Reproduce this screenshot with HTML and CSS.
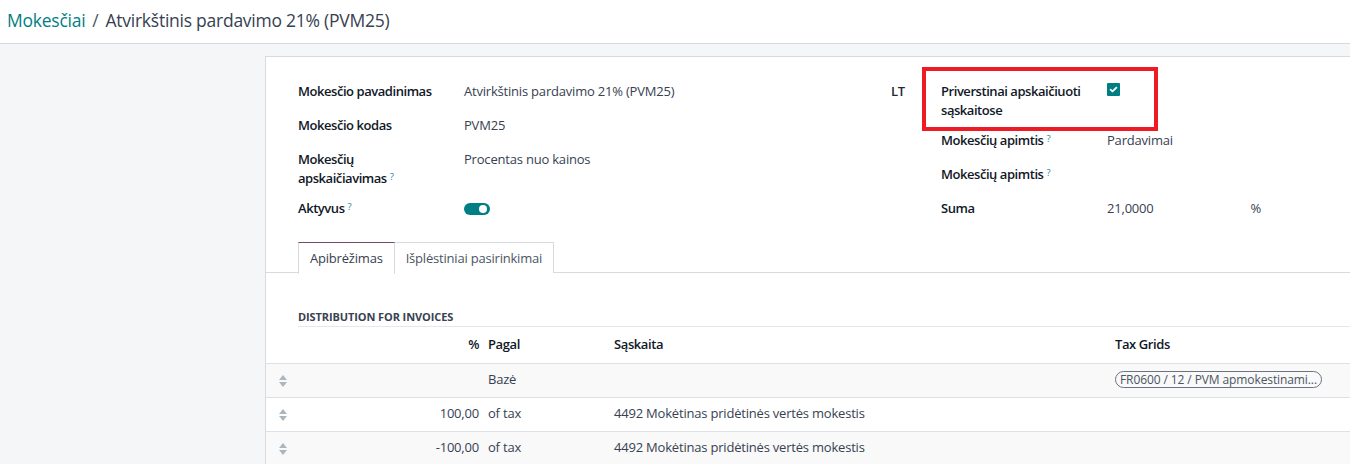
FILE: index.html
```html
<!DOCTYPE html>
<html lang="lt">
<head>
<meta charset="utf-8">
<title>Mokesčiai</title>
<link rel="stylesheet" href="styles.css">
</head>
<body>
<header class="topbar">
  <nav class="breadcrumb"><a class="crumb-link">Mokesčiai</a><span class="crumb-sep">/</span><span class="crumb-current">Atvirkštinis pardavimo 21% (PVM25)</span></nav>
</header>
<main class="content">
  <section class="sheet">
    <div class="groups">
      <div class="group group-left">
        <div class="frow"><div class="flabel">Mokesčio pavadinimas</div><div class="fvalue">Atvirkštinis pardavimo 21% (PVM25)</div></div>
        <div class="frow"><div class="flabel">Mokesčio kodas</div><div class="fvalue">PVM25</div></div>
        <div class="frow"><div class="flabel">Mokesčių apskaičiavimas<sup class="help">?</sup></div><div class="fvalue">Procentas nuo kainos</div></div>
        <div class="frow"><div class="flabel">Aktyvus<sup class="help">?</sup></div><div class="fvalue"><span class="toggle"><span class="knob"></span></span></div></div>
      </div>
      <div class="country">LT</div>
      <div class="group group-right">
        <div class="highlight"></div>
        <div class="frow"><div class="flabel">Priverstinai apskaičiuoti sąskaitose</div><div class="fvalue"><span class="checkbox"><svg viewBox="0 0 13 13" width="13" height="13"><path d="M3.6 6.7 L5.5 8.4 L9.4 4.6" fill="none" stroke="#fff" stroke-width="1.8" stroke-linecap="round" stroke-linejoin="round"/></svg></span></div></div>
        <div class="frow"><div class="flabel">Mokesčių apimtis<sup class="help">?</sup></div><div class="fvalue">Pardavimai</div></div>
        <div class="frow"><div class="flabel">Mokesčių apimtis<sup class="help">?</sup></div><div class="fvalue"></div></div>
        <div class="frow"><div class="flabel">Suma</div><div class="fvalue amount"><span>21,0000</span><span class="unit">%</span></div></div>
      </div>
    </div>

    <div class="notebook">
      <ul class="tabs">
        <li class="tab active">Apibrėžimas</li>
        <li class="tab">Išplėstiniai pasirinkimai</li>
      </ul>
      <div class="tab-pane">
        <div class="separator">DISTRIBUTION FOR INVOICES</div>
        <table class="lines">
          <colgroup>
            <col class="c-handle"><col class="c-pct"><col class="c-base"><col class="c-acc"><col class="c-grid">
          </colgroup>
          <thead>
            <tr><th></th><th class="num">%</th><th>Pagal</th><th>Sąskaita</th><th>Tax Grids</th></tr>
          </thead>
          <tbody>
            <tr class="odd"><td class="handle"><span class="arrows"></span></td><td class="num"></td><td>Bazė</td><td></td><td><span class="tag">FR0600 / 12 / PVM apmokestinami...</span></td></tr>
            <tr><td class="handle"><span class="arrows"></span></td><td class="num">100,00</td><td>of tax</td><td>4492 Mokėtinas pridėtinės vertės mokestis</td><td></td></tr>
            <tr class="odd"><td class="handle"><span class="arrows"></span></td><td class="num">-100,00</td><td>of tax</td><td>4492 Mokėtinas pridėtinės vertės mokestis</td><td></td></tr>
          </tbody>
        </table>
      </div>
    </div>
  </section>
</main>
</body>
</html>
```
FILE: styles.css
```css
* { box-sizing: border-box; }
html, body { margin: 0; padding: 0; }
body {
  font-family: "Open Sans", "Noto Sans", "Liberation Sans", sans-serif;
  font-size: 13px;
  line-height: 1.5;
  letter-spacing: -0.2px;
  color: #374151;
  background: #f5f6f8;
  height: 464px;
  overflow: hidden;
}
.topbar {
  height: 44px;
  background: #fff;
  border-bottom: 1px solid #d8dadd;
  display: flex;
  align-items: center;
  padding: 0 7px 2px;
}
.breadcrumb { font-size: 17.5px; letter-spacing: -0.25px; color: #374151; white-space: nowrap; }
.crumb-link { color: #017e84; }
.crumb-sep { margin: 0 7px; color: #4b5563; }
.content { padding: 12px 0 0 265px; }
.sheet {
  background: #fff;
  border-top: 1px solid #d8dadd;
  border-left: 1px solid #d8dadd;
  min-height: 420px;
  padding-top: 17px;
}
.groups { display: flex; padding-left: 32px; }
.group { display: flex; flex-direction: column; }
.group-left { width: 593px; }
.country { width: 25px; padding-top: 8px; font-weight: 600; color: #1f2937; line-height: 19px; letter-spacing: -0.4px; }
.group-right { position: relative; width: 380px; padding-left: 25px; }
.frow { display: grid; grid-template-columns: 166px 1fr; min-height: 34px; }
.flabel {
  padding: 8px 20px 3px 0;
  font-weight: 600;
  color: #111827;
  line-height: 19px;
  letter-spacing: -0.45px;
}
.fvalue { padding: 7px 0 4px; line-height: 20px; color: #374151; }
.help { color: #1d7fa0; font-size: 9.5px; font-weight: 500; margin-left: 3px; vertical-align: top; position: relative; top: -2px; }
.toggle {
  display: inline-block; width: 26px; height: 12px; border-radius: 6px;
  background: #017e84; position: relative; margin-top: 5px;
}
.knob { position: absolute; right: 3px; top: 2px; width: 8px; height: 8px; border-radius: 50%; background: #fff; }
.checkbox {
  display: inline-block; width: 13px; height: 13px; background: #017e84;
  border-radius: 1px; margin-top: 2px; vertical-align: top;
}
.checkbox svg { display: block; }
.amount { display: flex; }
.amount .unit { margin-left: 97px; }
.highlight {
  position: absolute; left: 6px; top: -7px; width: 236px; height: 64px;
  border: 4px solid #ed1c24; pointer-events: none;
}
.notebook { margin-top: 17px; }
.tabs {
  list-style: none; margin: 0; padding: 0 0 0 32px;
  display: flex; border-bottom: 1px solid #d8dadd; height: 31px;
}
.tab {
  padding: 0 11px; height: 31px; line-height: 30px;
  border: 1px solid #d8dadd; border-bottom: none; margin-left: -1px;
  color: #4b5563; background: #fff;
}
.tab:first-child { margin-left: 0; }
.tab.active { border-top-color: #714b67; color: #374151; height: 32px; position: relative; }
.tab-pane { padding-top: 36px; }
.separator {
  margin-left: 32px; font-size: 11px; font-weight: 700; color: #374151;
  line-height: 16px; padding-bottom: 1px; border-bottom: 1px solid #e5e7eb;
  letter-spacing: -0.1px;
}
.lines { width: 1084px; border-collapse: collapse; table-layout: fixed; }
.c-handle { width: 32px; }
.c-pct { width: 186px; }
.c-base { width: 126px; }
.c-acc { width: 501px; }
.lines th, .lines td { height: 34px; padding: 0 4px; text-align: left; vertical-align: middle; white-space: nowrap; overflow: hidden; }
.lines th { font-weight: 600; color: #111827; height: 36px; letter-spacing: -0.4px; }
.lines thead tr { border-bottom: 1px solid #dee2e6; }
.lines tbody tr { border-bottom: 1px solid #dee2e6; }
.lines tbody tr.odd { background: #f9f9f9; }
.lines td { color: #374151; }
.lines .num { text-align: right; padding-right: 5px; }
.handle { padding-left: 13px !important; }
.arrows { display: inline-block; width: 8px; height: 12px; position: relative; vertical-align: middle; }
.arrows::before, .arrows::after {
  content: ""; position: absolute; left: 0;
  border-left: 4px solid transparent; border-right: 4px solid transparent;
}
.arrows::before { top: 0; border-bottom: 5px solid #adb5bd; }
.arrows::after { bottom: 0; border-top: 5px solid #adb5bd; }
.tag {
  display: inline-block; border: 1px solid #6b7280; border-radius: 9px;
  padding: 0 4px; font-size: 12px; line-height: 15px; color: #4b5563; letter-spacing: -0.1px;
}
```
